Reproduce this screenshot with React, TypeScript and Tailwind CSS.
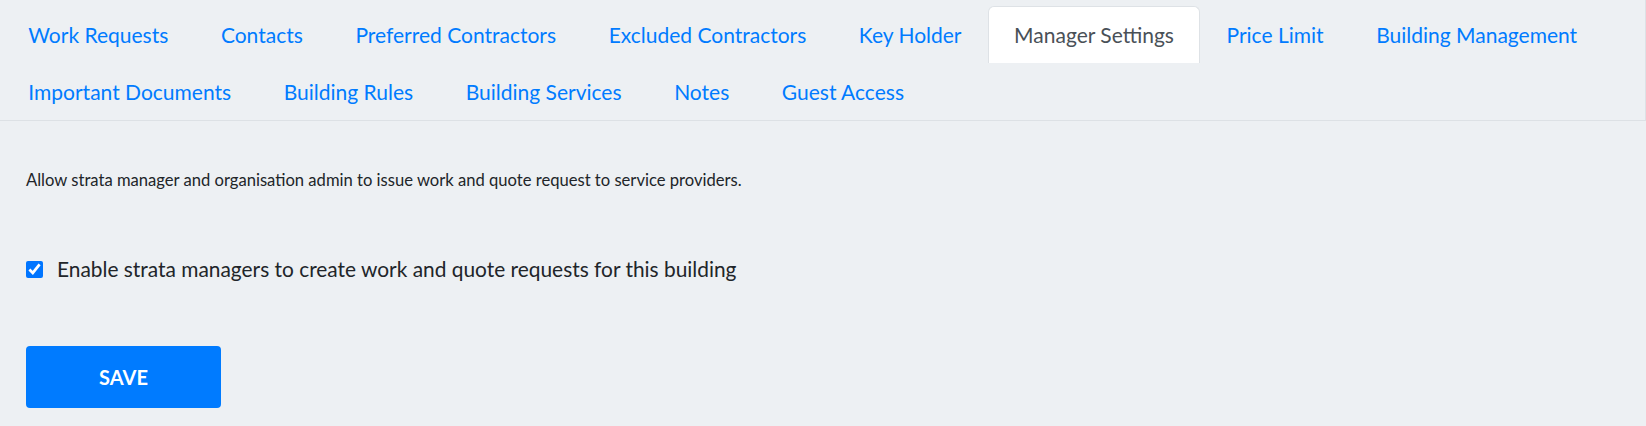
import { useState } from 'react';

const TABS = [
  'Work Requests',
  'Contacts',
  'Preferred Contractors',
  'Excluded Contractors',
  'Key Holder',
  'Manager Settings',
  'Price Limit',
  'Building Management',
  'Important Documents',
  'Building Rules',
  'Building Services',
  'Notes',
  'Guest Access',
];

export default function App() {
  const [active, setActive] = useState('Manager Settings');
  const [enabled, setEnabled] = useState(true);

  return (
    <div className="min-h-[426px] w-full bg-[#edf0f3] font-['Lato','Noto_Sans',sans-serif] text-[#212529]">
      <ul className="flex flex-wrap border-b border-r border-[#dde1e5] pl-[2px] pt-[6px] pr-px">
        {TABS.map((tab) => {
          const isActive = tab === active;
          return (
            <li key={tab}>
              <button
                type="button"
                onClick={() => setActive(tab)}
                className={
                  isActive
                    ? 'flex h-[57px] items-center rounded-t-[6px] border border-b-0 border-[#dee2e6] bg-white px-[25.3px] text-[21px] text-[#495057]'
                    : 'flex h-[57px] items-center border border-b-0 border-transparent px-[25.3px] text-[21px] text-[#007bff]'
                }
              >
                {tab}
              </button>
            </li>
          );
        })}
      </ul>

      <div className="px-[26px] pt-[48px]">
        <p className="text-[16.6px] leading-[22px]">
          Allow strata manager and organisation admin to issue work and quote request to service providers.
        </p>

        <label className="mt-[64px] flex items-center gap-[14px] text-[20.9px] leading-[28px] text-[#212529]">
          <input
            type="checkbox"
            checked={enabled}
            onChange={(e) => setEnabled(e.target.checked)}
            className="h-[17px] w-[17px] accent-[#0075ff]"
          />
          Enable strata managers to create work and quote requests for this building
        </label>

        <button
          type="button"
          className="mt-[63px] flex h-[62px] w-[195px] items-center justify-center rounded-[4px] bg-[#007bff] text-[20px] font-bold text-white"
        >
          SAVE
        </button>
      </div>
    </div>
  );
}
